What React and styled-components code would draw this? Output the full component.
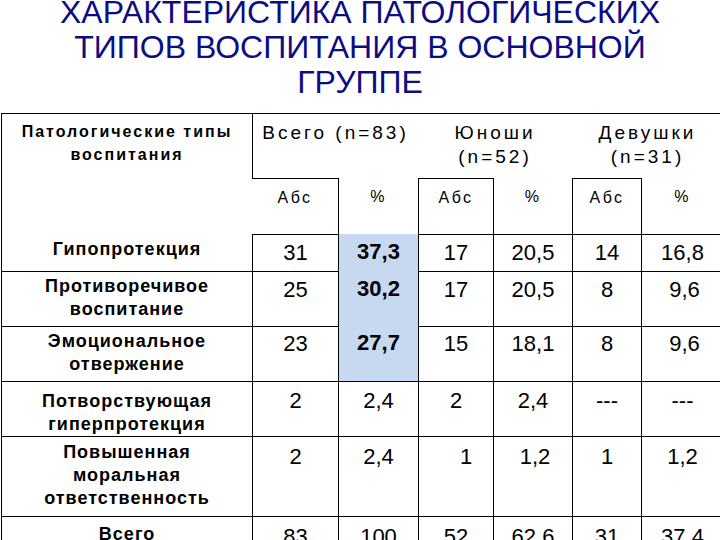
import React from "react";
import styled, { createGlobalStyle } from "styled-components";

const GlobalStyle = createGlobalStyle`
  html, body {
    margin: 0;
    padding: 0;
    background: #fff;
    overflow: hidden;
  }
  body {
    font-family: "Liberation Sans", Arial, sans-serif;
    color: #000;
  }
`;

const Slide = styled.div`
  width: 720px;
  height: 540px;
  overflow: hidden;
  background: #fff;
`;

const Title = styled.h1`
  margin: -5px 0 0;
  height: 118px;
  font-size: 32px;
  line-height: 35px;
  font-weight: normal;
  color: #0c0c84;
  text-align: center;
`;

const Table = styled.table`
  margin-left: 1px;
  width: 722px;
  table-layout: fixed;
  border-collapse: separate;
  border-spacing: 0;
`;

const Row = styled.tr`
  height: ${(p) => p.$h}px;
`;

const Cell = styled.td`
  box-sizing: border-box;
  padding: ${(p) => p.$pad || 0}px 0 0 ${(p) => p.$shift || 0}px;
  vertical-align: top;
  text-align: center;
  border-top: ${(p) => (p.$top ? "1px solid #000" : "none")};
  border-left: ${(p) => (p.$left ? "1px solid #000" : "none")};
  background: ${(p) => (p.$hl ? "#c6d9f1" : "transparent")};
`;

const HeadLabel = styled(Cell)`
  font-size: 16px;
  line-height: 23px;
  font-weight: bold;
  letter-spacing: 2px;
`;

const GroupHead = styled(Cell)`
  font-size: 19px;
  line-height: 24px;
  letter-spacing: 3px;
`;

const SubHead = styled(Cell)`
  font-size: 16px;
  line-height: 20px;
  letter-spacing: 2.4px;
`;

const Label = styled(Cell)`
  font-size: 18px;
  line-height: 23px;
  font-weight: bold;
  letter-spacing: 1px;
`;

const Num = styled(Cell)`
  font-size: 22px;
  line-height: 26px;
  font-weight: ${(p) => (p.$bold ? "bold" : "normal")};
`;

const Line = styled.div`
  white-space: nowrap;
`;

const widths = [251, 86, 80, 75, 79, 69, 82];

const rows = [
  { label: ["Гипопротекция"], vals: ["31", "37,3", "17", "20,5", "14", "16,8"], h: 37, pad: 5, lpad: 4, first: true },
  { label: ["Противоречивое", "воспитание"], vals: ["25", "30,2", "17", "20,5", "8", "9,6"], h: 55, pad: 5, lpad: 3, shift: { 5: 4 } },
  { label: ["Эмоциональное", "отвержение"], vals: ["23", "27,7", "15", "18,1", "8", "9,6"], h: 55, pad: 4, lpad: 3, shift: { 5: 4 } },
  { label: ["Потворствующая", "гиперпротекция"], vals: ["2", "2,4", "2", "2,4", "---", "---"], h: 54, pad: 6, lpad: 8 },
  { label: ["Повышенная", "моральная", "ответственность"], vals: ["2", "2,4", "1", "1,2", "1", "1,2"], h: 80, pad: 7, lpad: 4, shift: { 2: 20, 3: 4 } },
  { label: ["Всего"], vals: ["83", "100", "52", "62,6", "31", "37,4"], h: 40, pad: 7, lpad: 6 },
];

const groups = [
  { lines: ["Всего (n=83)"], left: true },
  { lines: ["Юноши", "(n=52)"] },
  { lines: ["Девушки", "(n=31)"] },
];

export default function App() {
  return (
    <Slide>
      <GlobalStyle />
      <Title>
        ХАРАКТЕРИСТИКА ПАТОЛОГИЧЕСКИХ
        <br />
        ТИПОВ ВОСПИТАНИЯ В ОСНОВНОЙ
        <br />
        ГРУППЕ
      </Title>
      <Table>
        <colgroup>
          {widths.map((w, i) => (
            <col key={i} style={{ width: w }} />
          ))}
        </colgroup>
        <tbody>
          <Row $h={65}>
            <HeadLabel $top $left $pad={6}>
              <Line>Патологические типы</Line>
              <Line>воспитания</Line>
            </HeadLabel>
            {groups.map((g, i) => (
              <GroupHead key={i} colSpan={2} $top $left={g.left} $pad={7}>
                {g.lines.map((l) => (
                  <Line key={l}>{l}</Line>
                ))}
              </GroupHead>
            ))}
          </Row>
          <Row $h={56}>
            <Cell $left />
            <SubHead $top $pad={9}>Абс</SubHead>
            <SubHead $left $pad={9}>%</SubHead>
            <SubHead $top $left $pad={9}>Абс</SubHead>
            <SubHead $left $pad={9}>%</SubHead>
            <SubHead $top $left $pad={9}>Абс</SubHead>
            <SubHead $left $pad={9}>%</SubHead>
          </Row>
          {rows.map((r, ri) => (
            <Row key={ri} $h={r.h}>
              <Label $left $top={!r.first} $pad={r.lpad}>
                {r.label.map((l) => (
                  <Line key={l}>{l}</Line>
                ))}
              </Label>
              {r.vals.map((v, vi) => {
                const hl = vi === 1 && ri < 3;
                return (
                  <Num
                    key={vi}
                    $left
                    $top={!hl}
                    $hl={hl}
                    $bold={hl}
                    $pad={r.pad}
                    $shift={r.shift && r.shift[vi]}
                  >
                    {v}
                  </Num>
                );
              })}
            </Row>
          ))}
        </tbody>
      </Table>
    </Slide>
  );
}
